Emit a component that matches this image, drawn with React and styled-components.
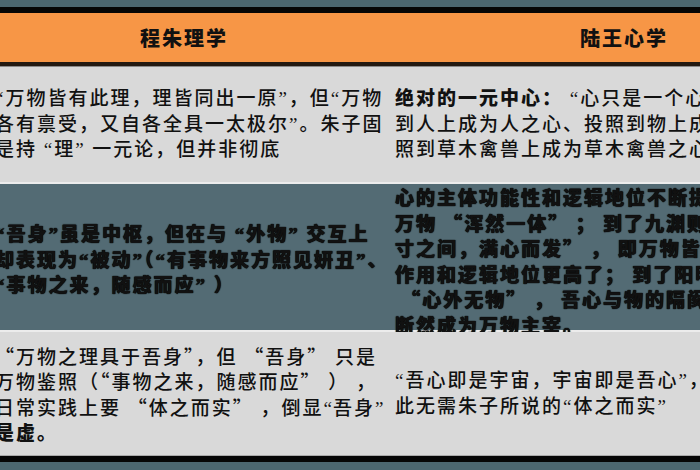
import React from "react";
import styled, { createGlobalStyle } from "styled-components";

const GlobalStyle = createGlobalStyle`
  html, body {
    margin: 0;
    padding: 0;
    background: #4c6770;
  }
`;

const Narrow = styled.span`
  font-family: "Liberation Serif", serif;
  letter-spacing: 1px;
`;

const rows = [
  {
    height: 115,
    tone: "#d9d9d9",
    left: {
      wide: false,
      lines: [
        "“万物皆有此理，理皆同出一原”，但“万物",
        "各有禀受，又自各全具一太极尔”。朱子固",
        "是持 “理” 一元论，但并非彻底",
      ],
    },
    right: {
      wide: false,
      lines: [
        [<b key="b">绝对的一元中心：</b>, " “心只是一个心，某之心，吾友之心"],
        "到人上成为人之心、投照到物上成为物之心",
        "照到草木禽兽上成为草木禽兽之心",
      ],
    },
  },
  {
    height: 146,
    tone: "#536b74",
    heavy: true,
    left: {
      wide: false,
      lines: [
        "“吾身”虽是中枢，但在与 “外物” 交互上",
        "却表现为“被动”（“有事物来方照见妍丑”、",
        "“事物之来，随感而应” ）",
      ],
    },
    right: {
      wide: true,
      lines: [
        "心的主体功能性和逻辑地位不断提高",
        "万物 “浑然一体” ； 到了九渊则",
        "寸之间，满心而发” ， 即万物皆",
        "作用和逻辑地位更高了； 到了阳明",
        " “心外无物” ， 吾心与物的隔阂",
        "断然成为万物主宰。",
      ],
    },
  },
  {
    height: 123,
    tone: "#d9d9d9",
    left: {
      wide: true,
      lines: [
        "“万物之理具于吾身”，但\u2005“吾身”\u2005只是",
        "万物鉴照（“事物之来，随感而应”\u2005）\u2005，",
        ["日常实践上要\u2005“体之而实”\u2005，倒显", <Narrow key="n">“</Narrow>, "吾身", <Narrow key="m">”</Narrow>],
        [<b key="b">是虚。</b>],
      ],
    },
    right: {
      wide: false,
      lines: [
        "“吾心即是宇宙，宇宙即是吾心”，",
        "此无需朱子所说的“体之而实”",
      ],
    },
  },
];

function App() {
  return (
    <Page>
      <GlobalStyle />
      <Strip />
      <Band />
      <TableRow $height={49} $tone="#f79646" $rule="4px solid #231a12">
        <HeadCell>程朱理学</HeadCell>
        <HeadCell>陆王心学</HeadCell>
      </TableRow>
      <Gap />
      {rows.map((row, i) => (
        <TableRow
          key={i}
          $height={row.height}
          $tone={row.tone}
          $rule={i === rows.length - 1 ? "1px solid #a9a9a9" : "2px solid #ececec"}
        >
          <Cell $pad={15} $heavy={row.heavy} $wide={row.left.wide}>
            {row.left.lines.map((l, j) => (
              <Line key={j}>{l}</Line>
            ))}
          </Cell>
          <Cell $pad={7} $heavy={row.heavy} $wide={row.right.wide}>
            {row.right.lines.map((l, j) => (
              <Line key={j}>{l}</Line>
            ))}
          </Cell>
        </TableRow>
      ))}
      <Band />
      <Strip />
    </Page>
  );
}

const Page = styled.div`
  width: 700px;
  height: 470px;
  overflow: hidden;
  background: #4c6770;
  display: flex;
  flex-direction: column;
`;

const Strip = styled.div`
  height: 7px;
  flex: none;
  background: #4c6770;
`;

const Band = styled.div`
  height: 6px;
  flex: none;
  background: #060606;
`;

const Gap = styled.div`
  height: 1px;
  flex: none;
  background: #8a8a8a;
`;

const TableRow = styled.div`
  flex: none;
  display: grid;
  grid-template-columns: 408px 472px;
  width: 880px;
  margin-left: -20px;
  height: ${(p) => p.$height}px;
  background: ${(p) => p.$tone};
  border-bottom: ${(p) => p.$rule};
`;

const HeadCell = styled.div`
  display: flex;
  align-items: center;
  justify-content: center;
  font-family: "Liberation Serif", "Noto Sans CJK SC", serif;
  font-weight: 900;
  font-size: 20px;
  letter-spacing: 2px;
  color: #111;
`;

const Cell = styled.div`
  display: flex;
  flex-direction: column;
  justify-content: center;
  overflow: visible;
  padding-left: ${(p) => p.$pad}px;
  font-family: ${(p) =>
    p.$wide
      ? `"Noto Sans CJK SC", "Liberation Serif", serif`
      : `"Liberation Serif", "Noto Sans CJK SC", serif`};
  font-size: 19px;
  letter-spacing: 2px;
  font-weight: ${(p) => (p.$heavy ? 900 : 500)};
  color: #111;
  text-shadow: ${(p) => (p.$heavy ? "0 0 1px #000, 0 0 1px #000" : "none")};

  b {
    font-weight: 800;
  }
`;

const Line = styled.div`
  white-space: pre;
  line-height: 25.5px;
  height: 25.5px;
`;

export default App;
